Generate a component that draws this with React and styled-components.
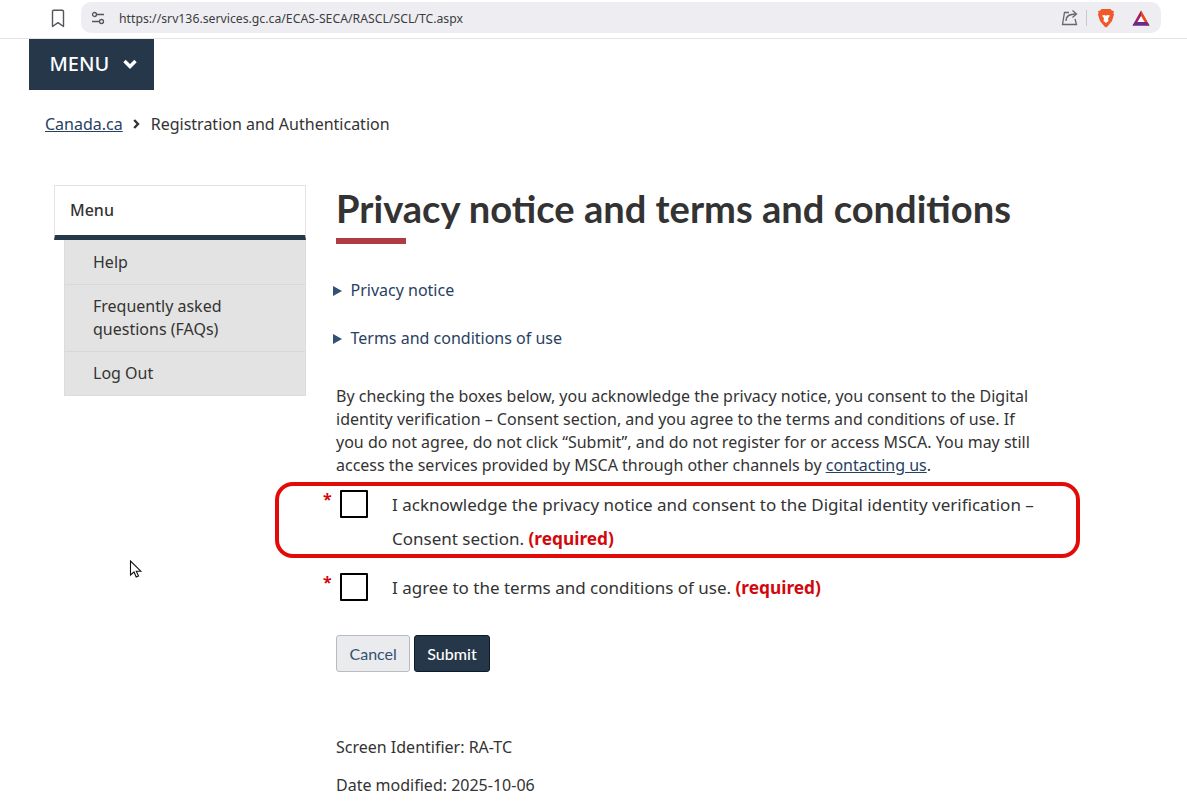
import React from "react";
import styled, { createGlobalStyle } from "styled-components";

const GlobalStyle = createGlobalStyle`
  html, body {
    margin: 0;
    padding: 0;
    background: #fff;
    color: #333;
    font-family: "Noto Sans", "Liberation Sans", sans-serif;
    font-size: 16px;
    overflow: hidden;
  }
`;

const Viewport = styled.div`
  position: relative;
  width: 1187px;
  height: 812px;
  overflow: hidden;
`;

const BrowserBar = styled.header`
  display: flex;
  align-items: flex-start;
  height: 39px;
  padding: 2px 26px 0 50px;
  box-sizing: border-box;
  border-bottom: 1px solid #e4e4e6;
`;

const BookmarkButton = styled.div`
  display: flex;
  width: 31px;
  padding-top: 7px;
`;

const AddressBar = styled.div`
  flex: 1;
  display: flex;
  align-items: center;
  height: 31px;
  padding: 0 11px 0 9px;
  background: #eeeef2;
  border-radius: 10px;
`;

const Url = styled.span`
  flex: 1;
  margin: 1px 0 0 13px;
  font-size: 12.25px;
  color: #3c3c40;
`;

const BarIcons = styled.div`
  display: flex;
  align-items: center;
`;

const Divider = styled.span`
  width: 1px;
  height: 16px;
  margin: 0 10px 0 8px;
  background: #c9c9ce;
`;

const IconGap = styled.span`
  width: 17px;
`;

const Page = styled.div`
  padding: 0 29px;
`;

const MenuButton = styled.div`
  display: flex;
  align-items: center;
  gap: 14px;
  width: 125px;
  height: 51px;
  padding: 0 0 2px 20.5px;
  box-sizing: border-box;
  background: #26374a;
  color: #fff;
  font-size: 20px;
  font-weight: 500;
`;

const Breadcrumb = styled.nav`
  display: flex;
  align-items: center;
  gap: 10.5px;
  margin: 23px 0 0 16px;
  height: 22px;
  line-height: 22px;
`;

const CrumbLink = styled.a`
  color: #284162;
  text-decoration: underline;
`;

const Columns = styled.div`
  display: flex;
  margin-top: 50px;
  padding-left: 25px;
`;

const Sidebar = styled.aside`
  width: 252px;
  flex-shrink: 0;
`;

const SideHeader = styled.div`
  height: 55px;
  box-sizing: border-box;
  padding-left: 15px;
  line-height: 49px;
  border: 1px solid #e3e3e3;
  border-bottom: 5px solid #26374a;
  font-weight: 500;
`;

const SideList = styled.ul`
  list-style: none;
  margin: 0 0 0 10px;
  padding: 1px 0 0;
  background: #e3e3e3;
  border: 1px solid #dcdcdc;
  border-top: 0;
`;

const SideItem = styled.li`
  padding: 10px 28px;
  line-height: 23px;
  color: #333;
  & + & {
    border-top: 1px solid #d8d8d8;
  }
`;

const Main = styled.main`
  width: 710px;
  margin-left: 30px;
`;

const Title = styled.h1`
  margin: -1px 0 0;
  font-family: Lato, "Liberation Sans", sans-serif;
  font-size: 38.1px;
  font-weight: 700;
  line-height: 48px;
  color: #333;
  white-space: nowrap;
`;

const TitleRule = styled.div`
  width: 70px;
  height: 6px;
  margin-top: 6px;
  background: #af3c43;
`;

const Summaries = styled.div`
  display: flex;
  flex-direction: column;
  gap: 25px;
  margin: 35px 0 0 -3px;
`;

const Summary = styled.div`
  display: flex;
  align-items: center;
  gap: 8.5px;
  line-height: 23px;
  color: #284162;
`;

const Caret = styled.span`
  width: 0;
  height: 0;
  border-left: 9px solid #335075;
  border-top: 5px solid transparent;
  border-bottom: 5px solid transparent;
`;

const Intro = styled.p`
  margin: 35px 0 0;
  width: 700px;
  line-height: 23px;
  color: #333;
`;

const Check = styled.div`
  display: flex;
  align-items: flex-start;
  margin-top: ${(p) => p.$top}px;
`;

const Star = styled.span`
  width: 0;
  position: relative;
  left: -13px;
  top: -1px;
  color: #d3080c;
  font-size: 16px;
  font-weight: 700;
  line-height: 24px;
`;

const Box = styled.span`
  flex-shrink: 0;
  width: 24px;
  height: 24px;
  border: 2px solid #000;
  margin: 2px 24px 0 4px;
  border-radius: 1px;
`;

const CheckText = styled.div`
  line-height: 33.5px;
  font-size: 17px;
  color: #333;
  width: 650px;
`;

const Required = styled.strong`
  color: #d3080c;
  font-size: 17.3px;
  font-weight: 700;
`;

const Buttons = styled.div`
  display: flex;
  gap: 4px;
  margin-top: 30px;
`;

const Button = styled.button`
  height: 37px;
  padding: 0 ${(p) => (p.$primary ? 12 : 12.5)}px;
  font-family: Lato, "Liberation Sans", sans-serif;
  font-size: 16px;
  border-radius: 3px;
  color: ${(p) => (p.$primary ? "#fff" : "#335075")};
  background: ${(p) => (p.$primary ? "#26374a" : "#eaebed")};
  border: 1px solid ${(p) => (p.$primary ? "#091c2d" : "#b8bcc2")};
  font-weight: ${(p) => (p.$primary ? 500 : 400)};
`;

const Meta = styled.p`
  margin: ${(p) => p.$top}px 0 0;
  line-height: 23px;
`;

const Highlight = styled.div`
  position: absolute;
  left: 275px;
  top: 482px;
  width: 805px;
  height: 76px;
  box-sizing: border-box;
  border: 4px solid #e30a0a;
  border-radius: 18px;
`;

const Cursor = styled.svg`
  position: absolute;
  left: 129px;
  top: 560px;
`;

const MenuChevron = () => (
  <svg width="14" height="10" viewBox="0 0 14 10" fill="none" stroke="#fff" strokeWidth="3.4">
    <path d="M1.500 2 7 7.500 12.500 2" />
  </svg>
);

const CrumbChevron = () => (
  <svg width="7" height="10" viewBox="0 0 7 10" fill="none" stroke="#333" strokeWidth="2.4">
    <path d="M1.200 1 5 5 1.200 9" />
  </svg>
);

const BookmarkIcon = () => (
  <svg width="16" height="20" viewBox="0 0 16 20" fill="none" stroke="#55555b" strokeWidth="1.4">
    <path d="M2.500 2.500c0-.8.5-1.300 1.300-1.300h8.400c.8 0 1.300.5 1.300 1.300v15L8 13.600l-5.500 3.900z" strokeLinejoin="round" />
  </svg>
);

const SiteSettingsIcon = () => (
  <svg width="16" height="16" viewBox="0 0 16 16" fill="none" stroke="#55555b" strokeWidth="1.3">
    <circle cx="4.5" cy="4.5" r="2" />
    <path d="M7 4.500h7M2 11.500h7" />
    <circle cx="11.5" cy="11.5" r="2" />
  </svg>
);

const ShareIcon = () => (
  <svg width="17" height="17" viewBox="0 0 17 17" fill="none" stroke="#66666c" strokeWidth="1.3">
    <path d="M8 3.500H3.500L1.500 15.500h14L14 10" />
    <path d="M5 12c0-5 3-7 10-7M11.500 1.500 15.500 5l-4 3.500" />
  </svg>
);

const BraveIcon = () => (
  <svg width="18" height="20" viewBox="0 0 18 20">
    <path d="M4.500 1h9l1.500 1.700 2 .3-.6 2 .6 1.500L15 13l-4.500 5.500L9 19.500 7.500 18.500 3 13 1 6.500l.6-1.500L1 3l2-.3z" fill="#f1592a" />
    <path d="M5 7.500 7.500 7 9 7.700 10.500 7l2.500.5-2 3 .5 2.500L9 15l-2.500-2 .5-2.500z" fill="#fff" />
  </svg>
);

const BatIcon = () => (
  <svg width="18" height="16" viewBox="0 0 18 16">
    <path d="M9 .5 17.500 15.500H.5z" fill="#9e1f63" />
    <path d="M9 .5 17.500 15.500H13L9 8z" fill="#ff5000" opacity="0.85" />
    <path d="M.5 15.500h17L15 12H3z" fill="#662d91" />
    <path d="M9 6 12.600 12H5.400z" fill="#fff" />
  </svg>
);

export default function App() {
  return (
    <Viewport>
      <GlobalStyle />
      <BrowserBar>
        <BookmarkButton>
          <BookmarkIcon />
        </BookmarkButton>
        <AddressBar>
          <SiteSettingsIcon />
          <Url>https://srv136.services.gc.ca/ECAS-SECA/RASCL/SCL/TC.aspx</Url>
          <BarIcons>
            <ShareIcon />
            <Divider />
            <BraveIcon />
            <IconGap />
            <BatIcon />
          </BarIcons>
        </AddressBar>
      </BrowserBar>
      <Page>
        <MenuButton>
          MENU
          <MenuChevron />
        </MenuButton>
        <Breadcrumb>
          <CrumbLink>Canada.ca</CrumbLink>
          <CrumbChevron />
          <span>Registration and Authentication</span>
        </Breadcrumb>
        <Columns>
          <Sidebar>
            <SideHeader>Menu</SideHeader>
            <SideList>
              <SideItem>Help</SideItem>
              <SideItem>Frequently asked questions (FAQs)</SideItem>
              <SideItem>Log Out</SideItem>
            </SideList>
          </Sidebar>
          <Main>
            <Title>Privacy notice and terms and conditions</Title>
            <TitleRule />
            <Summaries>
              <Summary>
                <Caret />
                Privacy notice
              </Summary>
              <Summary>
                <Caret />
                Terms and conditions of use
              </Summary>
            </Summaries>
            <Intro>
              By checking the boxes below, you acknowledge the privacy notice, you consent to the Digital identity
              verification – Consent section, and you agree to the terms and conditions of use. If you do not agree, do
              not click “Submit”, and do not register for or access MSCA. You may still access the services provided by
              MSCA through other channels by <CrumbLink>contacting us</CrumbLink>.
            </Intro>
            <Check $top={11}>
              <Star>*</Star>
              <Box />
              <CheckText>
                I acknowledge the privacy notice and consent to the Digital identity verification – Consent section.{" "}
                <Required>(required)</Required>
              </CheckText>
            </Check>
            <Check $top={16}>
              <Star>*</Star>
              <Box />
              <CheckText>
                I agree to the terms and conditions of use. <Required>(required)</Required>
              </CheckText>
            </Check>
            <Buttons>
              <Button>Cancel</Button>
              <Button $primary>Submit</Button>
            </Buttons>
            <Meta $top={64}>Screen Identifier: RA-TC</Meta>
            <Meta $top={15}>Date modified: 2025-10-06</Meta>
          </Main>
        </Columns>
      </Page>
      <Highlight />
      <Cursor width="14" height="20" viewBox="0 0 14 20">
        <path d="M1.500 1v14l3.500-3 2.200 5 2.300-1-2.200-4.800h4.500z" fill="#fff" stroke="#111" strokeWidth="1.1" />
      </Cursor>
    </Viewport>
  );
}
